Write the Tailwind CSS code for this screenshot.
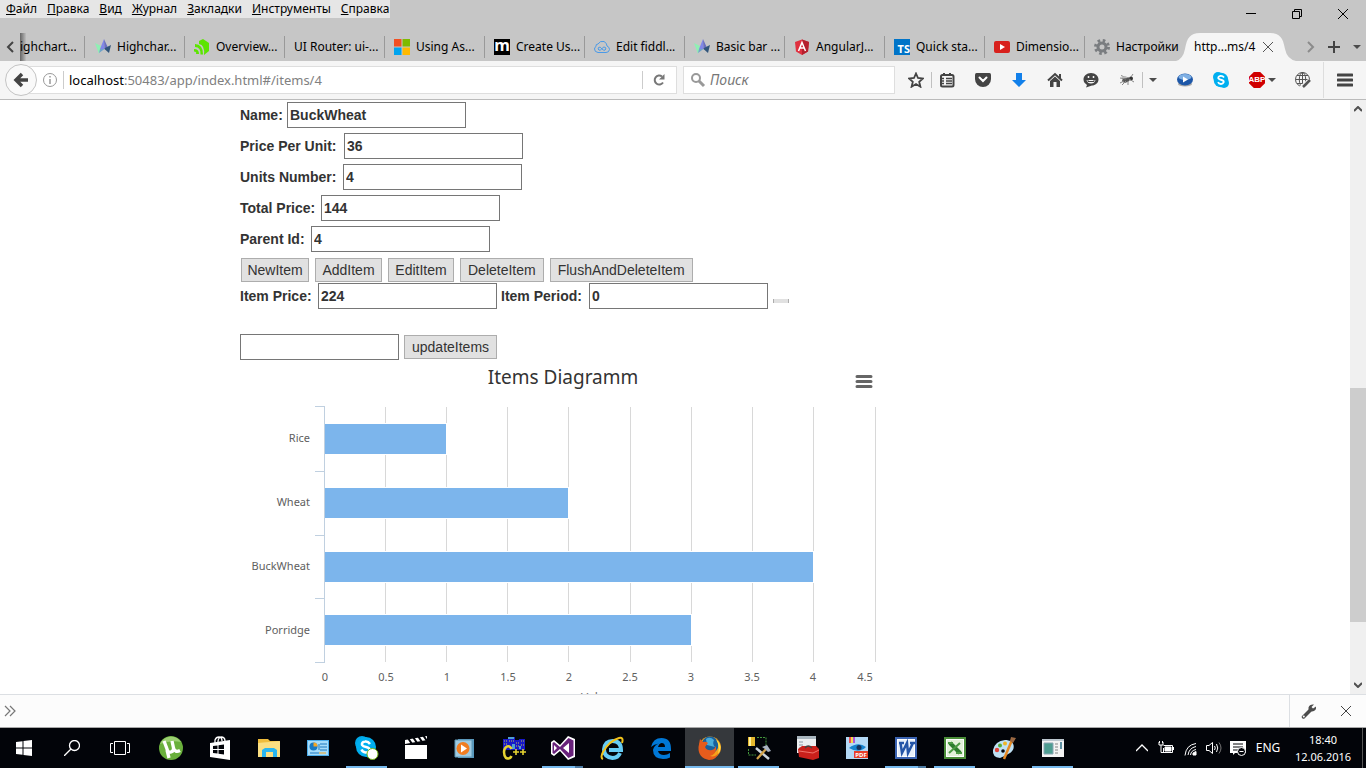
<!DOCTYPE html>
<html lang="ru">
<head>
<meta charset="utf-8">
<title>localhost:50483/app/index.html#/items/4</title>
<script src="https://cdn.jsdelivr.net/npm/@tailwindcss/browser@4"></script>
</head>
<body class="flex h-screen flex-col overflow-hidden bg-white font-['Noto_Sans','Open_Sans',sans-serif] text-xs text-black">

<svg class="hidden">
  <defs>
    <symbol id="highcharts" viewBox="0 0 16 16">
      <path d="M0 4L6 7L4 15Z" fill="#8ff0b4"/><path d="M9 0L5 10L9.500 10Z" fill="#8087e8"/><path d="M9 0L14 11L9.500 10Z" fill="#6a6fc0"/><path d="M5 10L9.500 10L4 14Z" fill="#6fa3c9"/><path d="M10 9L16 6L14 14L9.500 10Z" fill="#30557b"/>
    </symbol>
    <symbol id="caret" viewBox="0 0 8 4"><path d="M0 0H8L4 4Z" fill="#4c4c4c"/></symbol>
    <symbol id="cross" viewBox="0 0 12 12"><path d="M1 1L11 11M11 1L1 11" stroke="currentColor" fill="none"/></symbol>
  </defs>
</svg>

<header class="shrink-0 bg-[#c6c6c6]">
  <div class="flex h-[33px] items-start justify-between">
    <nav class="flex h-[18px] w-[390px] items-center gap-2.5 bg-[#e6e6e6] pl-1.5 leading-4">
      <a href="#"><u>Ф</u>айл</a><a href="#"><u>П</u>равка</a><a href="#"><u>В</u>ид</a><a href="#"><u>Ж</u>урнал</a><a href="#"><u>З</u>акладки</a><a href="#"><u>И</u>нструменты</a><a href="#"><u>С</u>правка</a>
    </nav>
    <div class="flex h-7 items-center">
      <button aria-label="Свернуть" class="flex w-[46px] justify-center"><svg class="h-3 w-3" viewBox="0 0 12 12"><path d="M1 5.500H11" stroke="#000"/></svg></button>
      <button aria-label="Развернуть" class="flex w-[46px] justify-center"><svg class="h-3 w-3" viewBox="0 0 12 12"><path d="M1.500 3.500H8.500V10.500H1.500ZM3.500 3V1.500H10.500V8.500H9" stroke="#000" fill="none"/></svg></button>
      <button aria-label="Закрыть" class="flex w-[46px] justify-center"><svg class="h-3 w-3"><use href="#cross"/></svg></button>
    </div>
  </div>
  <div class="flex h-7 items-stretch overflow-hidden whitespace-nowrap">
    <button aria-label="Назад по вкладкам" class="flex w-5 shrink-0 items-center justify-center"><svg class="h-3 w-2" viewBox="0 0 8 12"><path d="M7 1L2 6L7 11" fill="none" stroke="#444" stroke-width="2"/></svg></button>
    <button class="flex h-7 w-[65px] shrink-0 items-center bg-linear-to-r from-[#666] to-[#c6c6c6] to-10% pr-2"><span class="w-14 truncate text-clip">ighchart...</span><span class="ml-auto"></span></button>
    <div class="flex min-w-0 grow items-center">
      <button class="-ml-px flex h-[22px] w-[100px] items-center gap-1.5 border-l border-[#999] pl-[10px]"><svg class="size-4"><use href="#highcharts"/></svg>Highchar...</button>
      <button class="flex h-[22px] w-[100px] items-center gap-1.5 border-l border-[#999] pl-[9px]"><svg class="size-4" viewBox="0 0 16 16"><path d="M5 2L9 0L15 4V12L10 16Q11 6 5 5Z" fill="#5ce500"/><path d="M1 5Q9 5 9 15.500H6.500Q7 8 1 8Z" fill="#5ce500"/><path d="M0 10Q5 10 5 15H2Q3 12.500 0 12.500Z" fill="#5ce500"/></svg>Overview...</button>
      <button class="flex h-[22px] w-[100px] items-center border-l border-[#999] pl-[9px]">UI Router: ui-...</button>
      <button class="flex h-[22px] w-[100px] items-center gap-1.5 border-l border-[#999] pl-[9px]"><svg class="size-4" viewBox="0 0 16 16"><path d="M0 0H7.500V7.500H0Z" fill="#f25022"/><path d="M8.500 0H16V7.500H8.500Z" fill="#7fba00"/><path d="M0 8.500H7.500V16H0Z" fill="#00a4ef"/><path d="M8.500 8.500H16V16H8.500Z" fill="#ffb900"/></svg>Using As...</button>
      <button class="flex h-[22px] w-[100px] items-center gap-1.5 border-l border-[#999] pl-[9px]"><span class="flex size-4 items-center justify-center bg-black pb-1 text-base leading-4 font-bold text-white">m</span>Create Us...</button>
      <button class="flex h-[22px] w-[100px] items-center gap-1.5 border-l border-[#999] pl-[9px]"><svg class="size-4" viewBox="0 0 16 16" fill="none" stroke="#4a9ae8"><path d="M4 13.500Q.5 13 .5 10Q.7 8 2 7.500Q1.500 5 4 5Q6 1.500 10 2.500Q13 4 13 7Q15.500 8 15.500 10.500Q15 13.500 12 13.500Z"/><path d="M8 10Q6 7 4.500 8.500Q3.500 10 5 11.200Q6.500 11.500 8 9.500Q10 7 11.500 8.500Q12.300 10 11 11.200Q9.500 11.500 8 10Z"/></svg>Edit fiddl...</button>
      <button class="flex h-[22px] w-[100px] items-center gap-1.5 border-l border-[#999] pl-[9px]"><svg class="size-4"><use href="#highcharts"/></svg>Basic bar ...</button>
      <button class="flex h-[22px] w-[100px] items-center gap-1.5 border-l border-[#999] pl-[9px]"><svg class="size-4" viewBox="0 0 16 16"><path d="M8 .5L15 3L14 12.500L8 16L2 12.500L1 3Z" fill="#e0303f"/><path d="M8 .5L15 3L14 12.500L8 16Z" fill="#b5202e"/><path d="M4.500 12L8 3.500L11.500 12M6 9H10" fill="none" stroke="#fff" stroke-width="1.500"/></svg>AngularJ...</button>
      <button class="flex h-[22px] w-[100px] items-center gap-1.5 border-l border-[#999] pl-[9px]"><span class="flex size-4 items-end justify-end bg-[#0074c8] text-[11px] leading-3 font-bold text-white">TS</span>Quick sta...</button>
      <button class="flex h-[22px] w-[100px] items-center gap-1.5 border-l border-[#999] pl-[9px]"><svg class="size-4" viewBox="0 0 16 16"><rect y="2" width="16" height="12" rx="2" fill="#d8211d"/><path d="M6 5L11 8L6 11Z" fill="#fff"/></svg>Dimensio...</button>
      <button class="flex h-[22px] w-[92px] items-center gap-1.5 border-l border-[#999] pl-[9px]"><svg class="size-4 shrink-0" viewBox="0 0 16 16" fill="none" stroke="#7a7d80"><circle cx="8" cy="8" r="4" stroke-width="3"/><circle cx="8" cy="8" r="6.500" stroke-width="3" stroke-dasharray="2.550 2.550"/></svg>Настройки</button>
      <div class="relative h-7 w-[116px] shrink-0">
        <svg class="absolute inset-0 h-7 w-[122px]" viewBox="0 0 122 28"><path d="M0 28Q7 26 9 16C11 5 14 0 24 0H94C104 0 107 5 109 16Q111 26 120 28Z" fill="#f5f5f5"/></svg>
        <div class="relative flex h-7 items-center justify-between pr-[18px] pl-[18px]"><button>http...ms/4</button><button aria-label="Закрыть вкладку" class="text-[#555]"><svg class="size-3"><use href="#cross"/></svg></button></div>
      </div>
      <div class="flex grow items-center justify-end gap-[13px] pr-[5px]">
        <button aria-label="Вперёд по вкладкам"><svg class="h-3 w-2" viewBox="0 0 8 12"><path d="M1 1L6 6L1 11" fill="none" stroke="#8b8b8b" stroke-width="2"/></svg></button>
        <button aria-label="Новая вкладка"><svg class="size-3" viewBox="0 0 12 12"><path d="M6 0V12M0 6H12" stroke="#444" stroke-width="2"/></svg></button>
        <button aria-label="Список вкладок"><svg class="h-1 w-2"><use href="#caret"/></svg></button>
      </div>
    </div>
  </div>
</header>

<div class="flex h-[39px] shrink-0 items-center border-b border-[#bbb] bg-[#f5f5f5]">
  <button aria-label="Назад" class="z-10 ml-[5px] flex size-8 shrink-0 items-center justify-center rounded-full border border-[#c4c4c4] bg-[#f9f9f9]"><svg class="size-4" viewBox="0 0 16 16"><path d="M9 2L3 8L9 14M3 8H15" fill="none" stroke="#444" stroke-width="3.500"/></svg></button>
  <div class="-ml-4 flex h-7 grow items-center border border-[#dedede] bg-white pl-5">
    <svg class="size-4 shrink-0" viewBox="0 0 16 16" fill="none" stroke="#999"><circle cx="8" cy="8" r="6.500"/><path d="M8 7V12M8 4V5.500" stroke-width="1.500"/></svg>
    <span class="ml-[5px] h-[18px] w-px shrink-0 bg-[#ccc]"></span>
    <div role="textbox" aria-label="Адрес" tabindex="0" class="ml-[5px] grow text-[13px] leading-5 text-[#808080]"><span class="text-black">localhost</span>:50483/app/index.html#/items/4</div>
    <button aria-label="Обновить" class="flex h-[18px] w-[34px] items-center justify-center border-l border-[#ccc] pr-0.5"><svg class="size-3" viewBox="0 0 12 12"><path d="M10 8.500A4.500 4.500 0 1 1 9 2.500" fill="none" stroke="#777" stroke-width="2"/><path d="M11.500 0V5.500H6Z" fill="#777"/></svg></button>
  </div>
  <label class="ml-1.5 flex h-7 w-[212px] shrink-0 items-center gap-1 border border-[#dedede] bg-white pl-1.5">
    <svg class="size-4 shrink-0" viewBox="0 0 16 16" fill="none" stroke="#999"><circle cx="6" cy="6" r="4" stroke-width="2"/><path d="M9 9L14 14" stroke-width="3"/></svg>
    <input aria-label="Поиск" placeholder="Поиск" class="w-40 text-sm leading-5 italic outline-none placeholder:text-[#777]">
  </label>
  <div class="flex shrink-0 items-center text-[#444]">
    <button aria-label="В закладки" class="ml-1.5 flex w-[30px] justify-center"><svg class="size-4" viewBox="0 0 16 16"><path d="M8 1.500L10 6L15 6.500L11.200 9.800L12.400 14.700L8 12L3.600 14.700L4.800 9.800L1 6.500L6 6Z" fill="none" stroke="currentColor" stroke-width="1.800"/></svg></button>
    <span class="h-4 w-px bg-[#c0c0c0]"></span>
    <button aria-label="Закладки" class="flex w-[30px] justify-center"><svg class="size-4" viewBox="0 0 16 16" fill="none" stroke="currentColor"><rect x="2" y="3" width="12.500" height="11.500" rx="1.500" stroke-width="2"/><path d="M5 1V4M11 1V4" stroke-width="2"/><path d="M1 6.500H5M7 6.500H13M1 9H5M7 9H13M1 11.500H5M7 11.500H13" stroke-width="1.300"/></svg></button>
    <button aria-label="Pocket" class="ml-[3px] flex w-9 justify-center"><svg class="size-4" viewBox="0 0 16 16"><path d="M1.500 1H14.500Q16 1 16 3V7A8 8 0 0 1 0 7V3Q0 1 1.500 1Z" fill="currentColor"/><path d="M4.500 5.500L8 9L11.500 5.500" fill="none" stroke="#fff" stroke-width="2" stroke-linecap="round"/></svg></button>
    <button aria-label="Загрузки" class="flex w-9 justify-center"><svg class="size-4" viewBox="0 0 16 16"><path d="M5 1H11V8H15L8 15L1 8H5Z" fill="#1280ea"/></svg></button>
    <button aria-label="Домой" class="flex w-9 justify-center"><svg class="size-4" viewBox="0 0 16 16"><path d="M1 8.500L8 2L15 8.500" fill="none" stroke="currentColor" stroke-width="2"/><path d="M12 2H14V7L12 5ZM3 9L8 4.500L13 9V15H9.500V10H6.500V15H3Z" fill="currentColor"/></svg></button>
    <button aria-label="Hello" class="flex w-9 justify-center"><svg class="size-4" viewBox="0 0 16 16"><path d="M8 1C12.500 1 15.500 4 15.500 7.500C15.500 11 12 13.500 9 13.500L3 15.500L4 13C2 11.500 .5 10 .5 7.500C.5 4 3.500 1 8 1Z" fill="currentColor"/><path d="M3.500 8H12.500Q11.500 11.500 8 11.500Q4.500 11.500 3.500 8Z" fill="#f5f5f5"/><path d="M5 8V9.500H11V8" fill="none" stroke="#444"/><path d="M5.500 4V6M10.500 4V6" stroke="#f5f5f5" stroke-width="1.500"/></svg></button>
    <button aria-label="Firebug" class="flex w-[33px] justify-center pl-[3px]"><svg class="size-4" viewBox="0 0 16 16"><ellipse cx="7" cy="8" rx="4" ry="2.300" transform="rotate(-20 7 8)" fill="#555"/><circle cx="12" cy="6.500" r="2" fill="#333"/><path d="M1 6L7 7M2 3.500L8 6M10 7L15 10M7 9L3 13M9 9L9 13M5 9L1 11M12 5L14 2" stroke="#888"/><path d="M2 6Q6 2 9 6Z" fill="#bbb"/></svg></button>
    <span class="h-4 w-px bg-[#c0c0c0]"></span>
    <button aria-label="Меню Firebug" class="flex w-5 justify-center"><svg class="h-1 w-2"><use href="#caret"/></svg></button>
    <button aria-label="Видео" class="ml-1 flex w-9 justify-center"><svg class="size-4" viewBox="0 0 16 16"><ellipse cx="8" cy="12" rx="7" ry="2.500" fill="#aaa"/><ellipse cx="8" cy="7.500" rx="8" ry="6" fill="#1d57a8"/><ellipse cx="8" cy="5" rx="6.500" ry="3" fill="#7fb0e4"/><path d="M6 4.500L11 7.500L6 10.500Z" fill="#fff"/></svg></button>
    <button aria-label="Skype" class="flex w-9 justify-center"><svg class="size-4" viewBox="0 0 16 16"><circle cx="5" cy="5" r="5" fill="#00aff0"/><circle cx="11" cy="11" r="5" fill="#00aff0"/><circle cx="8" cy="8" r="7.300" fill="#00aff0"/><path d="M11 5.500Q9.500 3.500 7 4Q5 4.500 5.300 6.300Q6 7.500 8.500 8Q11 8.500 10.700 10.200Q10 12 8 12Q5.800 12 5 10.200" fill="none" stroke="#fff" stroke-width="1.800"/></svg></button>
    <button aria-label="Adblock Plus" class="flex w-[46px] items-center gap-[3px] pl-[10px]"><span class="flex size-4 items-center justify-center bg-[#d00000] font-['Liberation_Sans',sans-serif] text-[8px] leading-4 font-bold text-white [clip-path:polygon(30%_0,70%_0,100%_30%,100%_70%,70%_100%,30%_100%,0_70%,0_30%)]">ABP</span><svg class="h-1 w-2"><use href="#caret"/></svg></button>
    <button aria-label="Редактор" class="flex w-9 justify-center"><svg class="size-4" viewBox="0 0 16 16" fill="none" stroke="#555"><circle cx="7.500" cy="7.500" r="7"/><ellipse cx="7.500" cy="7.500" rx="3.200" ry="7"/><path d="M.5 7.500H14.500M2 3.500H13M2 11.500H10M7.500 0V15"/><path d="M15 8L8 14L6 16" stroke="#f5f5f5" stroke-width="4"/><path d="M15 8L8 15" stroke-width="2.500"/></svg></button>
    <span class="ml-0.5 h-9 w-px bg-[#ddd]"></span>
    <button aria-label="Меню" class="flex w-[42px] justify-center"><svg class="size-4" viewBox="0 0 16 16"><path d="M1 3H15M1 8H15M1 13H15" stroke="#444" stroke-width="3" stroke-linecap="round"/></svg></button>
  </div>
</div>

<div class="flex min-h-0 grow">
  <main class="grow overflow-hidden pt-0.5 pl-60 font-['Liberation_Sans',Arial,sans-serif] text-sm leading-5 text-[#333]">
    <div class="flex flex-col gap-[5px] font-bold">
      <div class="flex items-center"><label for="name" class="w-[47px]">Name:</label><input id="name" value="BuckWheat" class="h-[26px] w-[179px] border border-[#767676] px-0.5"></div>
      <div class="flex items-center"><label for="ppu" class="w-[104px]">Price Per Unit:</label><input id="ppu" value="36" class="h-[26px] w-[179px] border border-[#767676] px-0.5"></div>
      <div class="flex items-center"><label for="units" class="w-[103px]">Units Number:</label><input id="units" value="4" class="h-[26px] w-[179px] border border-[#767676] px-0.5"></div>
      <div class="flex items-center"><label for="total" class="w-[81px]">Total Price:</label><input id="total" value="144" class="h-[26px] w-[179px] border border-[#767676] px-0.5"></div>
      <div class="flex items-center"><label for="parent" class="w-[71px]">Parent Id:</label><input id="parent" value="4" class="h-[26px] w-[179px] border border-[#767676] px-0.5"></div>
    </div>
    <div class="mt-1.5 ml-px flex gap-1.5">
      <button class="h-6 w-[68px] border border-[#adadad] bg-[#e1e1e1]">NewItem</button>
      <button class="h-6 w-[67px] border border-[#adadad] bg-[#e1e1e1]">AddItem</button>
      <button class="h-6 w-[66px] border border-[#adadad] bg-[#e1e1e1]">EditItem</button>
      <button class="h-6 border border-[#adadad] bg-[#e1e1e1] px-[7px]">DeleteItem</button>
      <button class="h-6 border border-[#adadad] bg-[#e1e1e1] px-[7px]">FlushAndDeleteItem</button>
    </div>
    <div class="mt-px flex items-center font-bold">
      <label for="price" class="w-[78px]">Item Price:</label><input id="price" value="224" class="h-[26px] w-[179px] border border-[#767676] px-0.5">
      <label for="period" class="ml-1 w-[88px]">Item Period:</label><input id="period" value="0" class="h-[26px] w-[179px] border border-[#767676] px-0.5">
      <button aria-label="Применить" class="mb-1.5 ml-[5px] h-1 w-4 self-end border-x border-[#adadad] bg-[#e1e1e1]"></button>
    </div>
    <div class="mt-[25px] flex items-center gap-[5px]">
      <input aria-label="Items" class="h-[26px] w-[159px] border border-[#767676] px-0.5">
      <button class="h-6 border border-[#adadad] bg-[#e1e1e1] px-[7px]">updateItems</button>
    </div>
    <svg class="h-[400px] w-[646px] font-['Noto_Sans',sans-serif]" viewBox="0 0 646 400" role="img" aria-label="Items Diagramm">
      <text x="323" y="24" text-anchor="middle" font-size="19" fill="#333">Items Diagramm</text>
      <path d="M617 16.500H631M617 21.500H631M617 26.500H631" stroke="#666" stroke-width="3" stroke-linecap="round"/>
      <path d="M145.500 47V302M206.500 47V302M267.500 47V302M328.500 47V302M390.500 47V302M451.500 47V302M512.500 47V302M573.500 47V302M635.500 47V302" stroke="#d8d8d8"/>
      <path d="M75 46.500H84.500V302.500H75M75 111.500H84M75 175.500H84M75 238.500H84" fill="none" stroke="#c0d0e0"/>
      <g fill="#7cb5ec" stroke="#fff">
        <rect x="84.500" y="63.500" width="122" height="31"/><rect x="84.500" y="127.500" width="244" height="31"/><rect x="84.500" y="191.500" width="489" height="31"/><rect x="84.500" y="254.500" width="367" height="31"/>
      </g>
      <path d="M84.500 46V303" stroke="#c0d0e0"/>
      <g font-size="11" fill="#606060" text-anchor="end">
        <text x="70" y="82">Rice</text><text x="70" y="146">Wheat</text><text x="70" y="210">BuckWheat</text><text x="70" y="274">Porridge</text>
      </g>
      <g font-size="11" fill="#606060" text-anchor="middle">
        <text x="85" y="321">0</text><text x="146" y="321">0.5</text><text x="207" y="321">1</text><text x="268" y="321">1.5</text><text x="329" y="321">2</text><text x="390" y="321">2.5</text><text x="451" y="321">3</text><text x="512" y="321">3.5</text><text x="573" y="321">4</text><text x="625" y="321">4.5</text>
      </g>
      <text x="341" y="342" font-size="12" fill="#707070">Values</text>
    </svg>
  </main>
  <div class="flex w-4 shrink-0 flex-col items-center bg-[#f0f0f0]">
    <svg class="mt-1.5 h-1.5 w-2" viewBox="0 0 8 6"><path d="M0 5L4 1L8 5" fill="none" stroke="#505050" stroke-width="2"/></svg>
    <div class="w-full grow-276"></div>
    <div class="h-[234px] w-full bg-[#cdcdcd]"></div>
    <div class="w-full grow-60"></div>
    <svg class="mb-1.5 h-1.5 w-2" viewBox="0 0 8 6"><path d="M0 1L4 5L8 1" fill="none" stroke="#505050" stroke-width="2"/></svg>
  </div>
</div>

<div class="flex h-[34px] shrink-0 items-center border-t border-b border-t-[#dcdfe3] border-b-[#a8a8a8] bg-[#fcfcfc]">
  <button aria-label="Показать панель" class="ml-1"><svg class="size-3" viewBox="0 0 12 12"><path d="M1 1L6 6L1 11M6 1L11 6L6 11" fill="none" stroke="#777" stroke-width="1.200"/></svg></button>
  <div class="ml-auto flex h-full items-center border-l border-[#dcdfe3] pr-0.5">
    <button aria-label="Настройки панели" class="flex w-[37px] justify-center"><svg class="size-4" viewBox="0 0 16 16"><path d="M2.500 14L9 7.500" stroke="#4c4c4c" stroke-width="3.500" stroke-linecap="round"/><path d="M13 1.500L10.500 4L12 5.500L15 3.500Q15.500 8 11 8.500Q7 8.500 7.500 4.500Q8.500 1 13 1.500Z" fill="#4c4c4c"/><circle cx="2.800" cy="13.500" r="1" fill="#fcfcfc"/></svg></button>
    <button aria-label="Закрыть панель" class="flex w-[37px] justify-center text-[#444]"><svg class="size-3"><use href="#cross"/></svg></button>
  </div>
</div>

<footer class="flex h-10 shrink-0 items-stretch bg-[#020409] text-white">
  <button aria-label="Пуск" class="flex w-12 items-center justify-center"><svg class="size-4" viewBox="0 0 16 16" fill="#fff"><path d="M0 2L6.500 1.200V7.500H0ZM7.500 1L16 0V7.500H7.500ZM0 8.500H6.500V14.800L0 14ZM7.500 8.500H16V16L7.500 15Z"/></svg></button>
  <button aria-label="Поиск" class="flex w-12 items-center justify-center"><svg class="size-4" viewBox="0 0 16 16" fill="none" stroke="#fff" stroke-width="1.300"><circle cx="10.500" cy="5.500" r="5"/><path d="M7 9L0 16"/></svg></button>
  <button aria-label="Представление задач" class="flex w-[50px] items-center justify-center pr-0.5"><svg class="h-4 w-5" viewBox="0 0 20 16" fill="none" stroke="#fff"><path d="M4.500 1.500H15.500V14.500H4.500ZM3 3.500H.5V12.500H3M17 3.500H19.500V12.500H17"/></svg></button>

  <button aria-label="uTorrent" class="flex w-[49px] items-center justify-center"><svg class="size-6" viewBox="0 0 24 24"><circle cx="12" cy="12" r="12" fill="#6ab03c"/><path d="M1 8A12 12 0 0 1 22 6Q12 4 1 8Z" fill="#9bcf72"/><path d="M5 5L8 13Q9 17 12 16Q15 15 14.500 12L13 5M14.500 12Q16 17 21 14.500M8 14L10 22" fill="none" stroke="#fff" stroke-width="3.300"/></svg></button>
  <button aria-label="Магазин" class="flex w-[49px] items-center justify-center"><svg class="size-6" viewBox="0 0 24 24"><path d="M2 7L22 4V24L2 21Z" fill="#fff"/><path d="M7 7V4Q8 1 11 1Q14 1 14 5M10 6Q10 2 13 1Q17 1 17 5" fill="none" stroke="#fff" stroke-width="1.300"/><path d="M5 10L9.500 9.500V13H5ZM10.500 9.300L16 8.500V13H10.500ZM5 14H9.500V17.500L5 17ZM10.500 14H16V18.500L10.500 17.700Z" fill="#020409"/></svg></button>
  <button aria-label="Проводник" class="flex w-[49px] items-center justify-center"><svg class="size-6" viewBox="0 0 24 24"><path d="M1 3H11L13 5H22V21H1Z" fill="#f0bd3c"/><path d="M1 7L23 5V21H1Z" fill="#fbdf82"/><path d="M5 21V14L8 12H17L20 14V21H16V16H9V21Z" fill="#29b6f0"/></svg></button>
  <button aria-label="Панель управления" class="flex w-[49px] items-center justify-center"><svg class="size-6" viewBox="0 0 24 24"><rect x="1" y="4" width="22" height="16" fill="#4cadea"/><rect x="2" y="5" width="20" height="14" fill="#a5dcfa"/><circle cx="7.500" cy="10.500" r="4" fill="#1679c4"/><path d="M7.500 10.500V6.500A4 4 0 0 1 11.500 10.500Z" fill="#f5a623"/><path d="M14 8H21M14 11H21M14 14H21M13 8V14M4 17H13" stroke="#1e78be"/><path d="M13 17H20" stroke="#f5a623"/></svg></button>
  <button aria-label="Skype" class="relative flex w-[49px] items-center justify-center"><svg class="size-6" viewBox="0 0 24 24"><circle cx="7" cy="7" r="7" fill="#00a8e8"/><circle cx="11" cy="11" r="10" fill="#00aff0"/><circle cx="15" cy="16" r="6" fill="#00a8e8"/><path d="M15 8Q13 5 10 5.500Q6.500 6 7 8.800Q8 10.500 11 11Q15.500 12 14.500 14.500Q13.500 17 10.500 16.500Q7.500 16 6.500 13.500" fill="none" stroke="#fff" stroke-width="2.500"/><circle cx="17.500" cy="18" r="5.500" fill="#fff" stroke="#74b816"/></svg><span class="absolute inset-x-1 bottom-0 h-0.5 bg-[#76b9ed]"></span></button>
  <button aria-label="Кино и ТВ" class="flex w-[49px] items-center justify-center"><svg class="size-6" viewBox="0 0 24 24"><path d="M1 9H23V23H1Z" fill="#fff"/><path d="M1 4L23 0V4L1 8Z" fill="#fff"/><path d="M4 2L8 8M9 1L13 7M14 0L18 6M19 -1L23 5" stroke="#020409" stroke-width="2"/></svg></button>
  <button aria-label="Проигрыватель" class="flex w-[49px] items-center justify-center"><svg class="size-6" viewBox="0 0 24 24"><path d="M5 3H21V22H5Z" fill="#5898bd"/><path d="M2 4H19V21H2Z" fill="#9fcbe1" stroke="#5f99b8"/><circle cx="10" cy="12.500" r="6.500" fill="#f07d21"/><path d="M8 8.500L14 12.500L8 16.500Z" fill="#fff"/></svg></button>
  <button aria-label="C++" class="flex w-[49px] items-center justify-center"><svg class="size-6" viewBox="0 0 24 24"><path d="M1 3H6V1H13V4H17V3H23V14H1Z" fill="#1818c8"/><path d="M6 1H12V3H6ZM10 8H13V13H10ZM17 10H19V13H17Z" fill="#4f9fd0"/><path d="M2 5H5M2 8H5M7 5H12M14 7H17M19 5H22M19 9H22M14 10H17" stroke="#c9c24a" stroke-dasharray="1 1"/><path d="M9.500 13Q8 9.500 5 10.500Q2 12 2 16Q2 20 4 22Q8 23.500 9.500 20" fill="none" stroke="#e5d331" stroke-width="2.500"/><path d="M11 16H17M14 13V19M18 16H24M21 13V19" stroke="#e5d331" stroke-width="1.600"/></svg></button>
  <button aria-label="Visual Studio" class="relative flex w-[49px] items-center justify-center"><svg class="size-6" viewBox="0 0 24 24"><path d="M0 6L3 4L9 9L17 0L24 3V21L17 24L9 15L3 20L0 18Z" fill="#fff"/><path d="M1.500 7L3 6L9 11L17.500 2L22.500 4.500V19.500L17.500 22L9 13L3 18L1.500 17Z" fill="#68217a"/><path d="M3 9V15L6 12ZM18 7V17L12 12Z" fill="#fff"/></svg><span class="absolute inset-x-1 bottom-0 h-0.5 border-r-8 border-[#4d7ba3] bg-[#76b9ed]"></span></button>
  <button aria-label="Internet Explorer" class="flex w-[49px] items-center justify-center"><svg class="size-6" viewBox="0 0 24 24"><path d="M20 17Q18 22 12.500 22Q4 21 4 13.500Q5 5 12.500 5Q21 5 21 14H9" fill="none" stroke="#66ccf4" stroke-width="4"/><path d="M3 23Q0 22 3 16Q9 5 19 2Q24 1 22 7" fill="none" stroke="#f1c21b" stroke-width="2"/></svg></button>
  <button aria-label="Edge" class="flex w-[49px] items-center justify-center"><svg class="size-6" viewBox="0 0 24 24"><path d="M2 11Q4 2 12.500 2Q22 2 22 13V15H9Q10 19 15 19Q18 19 21 17V21.500Q18 23 14 23Q4 22.500 4 14Q5 9 10 7.500Q5 8 2 11ZM9 11H16Q16 7 12.500 7Q10 7.500 9 11Z" fill="#0078d7"/></svg></button>
  <button aria-label="Firefox" class="relative flex w-[49px] items-center justify-center bg-[#35383c]"><svg class="size-6" viewBox="0 0 24 24"><circle cx="12" cy="11.500" r="11" fill="#f6a11b"/><circle cx="12" cy="9" r="8.500" fill="#18609d"/><path d="M8 3Q12 0 16 4Q14 8 17 11L9 9Z" fill="#49acd9"/><path d="M2 3L5 6Q8 5 10 7L7 11Q9 15 14 14Q17 13 18 10Q19 18 12 20Q19 22 22 14Q19 24 11 24Q0 22 .5 11Z" fill="#e65c1c"/><path d="M18 3Q26 11 20 18Q22 10 18 3Z" fill="#ffe04a"/></svg><span class="absolute inset-x-0 bottom-0 h-0.5 bg-[#76b9ed]"></span></button>
  <button aria-label="Инструменты" class="relative flex w-[49px] items-center justify-center"><svg class="size-6" viewBox="0 0 24 24"><path d="M1 1H8V10H1Z" fill="#e5b72c"/><path d="M2 1H4V10H2Z" fill="#fff2a0"/><path d="M10 1.500H19V10M1.500 13V19H9" fill="none" stroke="#43963c" stroke-dasharray="2 1"/><path d="M9 12L22 23" stroke="#ccd4dd" stroke-width="2.500"/><path d="M20 12L10 23" stroke="#d3a34a" stroke-width="2.300"/><path d="M15 11L20 9L24 15L21 16L18 13Z" fill="#aab3c2"/></svg><span class="absolute inset-x-1 bottom-0 h-0.5 bg-[#76b9ed]"></span></button>
  <button aria-label="Набор инструментов" class="flex w-[49px] items-center justify-center"><svg class="size-6" viewBox="0 0 24 24"><rect x="1" width="19" height="17" fill="#eceff1"/><path d="M1 0H20V3H1Z" fill="#a9b6bf"/><path d="M3 6H7M3 9H7M3 12H7" stroke="#8a98a5"/><path d="M2 13L6 10H20L23 13V22L17 24L3 21Z" fill="#c9201b"/><path d="M3 15L17 17L23 14" fill="none" stroke="#f0736a"/><path d="M9 12Q12 8 16 12" fill="none" stroke="#444" stroke-width="1.500"/></svg></button>
  <button aria-label="PDF" class="flex w-[49px] items-center justify-center"><svg class="size-6" viewBox="0 0 24 24"><rect x="1" y="1" width="22" height="22" fill="#b3d9f6"/><path d="M4 1H6V7H4Z" fill="#ef5454"/><path d="M6 1H8V7H6Z" fill="#f4dd4d"/><path d="M8 1H10V7H8Z" fill="#b056d8"/><path d="M4 12Q13 5 21 11Q14 18 4 12Z" fill="#1784cf"/><circle cx="14" cy="11.500" r="2.500" fill="#15325c"/><rect x="9" y="15" width="14" height="7" fill="#e8402a"/><text x="16" y="21" text-anchor="middle" font-size="6" font-weight="bold" fill="#fff">PDF</text></svg></button>
  <button aria-label="Word" class="relative flex w-[49px] items-center justify-center"><svg class="size-6" viewBox="0 0 24 24"><rect x="2" y="2" width="20" height="20" fill="#fff" stroke="#3c64b2" stroke-width="2"/><rect x="4" y="4" width="16" height="16" fill="#e8f0fb"/><path d="M5 7H10M6.500 7L8 17L13 7L14 17L19 7M16 7H21" fill="none" stroke="#2455a8" stroke-width="2.500"/></svg><span class="absolute inset-x-1 bottom-0 h-0.5 border-r-8 border-[#4d7ba3] bg-[#76b9ed]"></span></button>
  <button aria-label="Excel" class="relative flex w-[49px] items-center justify-center"><svg class="size-6" viewBox="0 0 24 24"><rect x="2" y="2" width="20" height="20" fill="#fff" stroke="#4a8d38" stroke-width="2"/><rect x="4" y="4" width="16" height="16" fill="#e3f1da"/><path d="M7 7L17 17" stroke="#2d7d2e" stroke-width="4"/><path d="M17 7L6 17M5 7H10M13 17H19" stroke="#4b9b43" stroke-width="2"/></svg><span class="absolute inset-x-1 bottom-0 h-0.5 bg-[#76b9ed]"></span></button>
  <button aria-label="Paint" class="flex w-[49px] items-center justify-center"><svg class="size-6" viewBox="0 0 24 24"><path d="M13 4C23 4 24 13 18 17Q13 20 8 22Q0 21 1 14Q3 5 13 4Z" fill="#bfe1f4"/><circle cx="5" cy="14" r="2.200" fill="#df4338"/><circle cx="8" cy="9.500" r="2" fill="#56aa36"/><circle cx="13" cy="7.500" r="2" fill="#f0b525"/><circle cx="11" cy="15" r="1.800" fill="#020409"/><path d="M20 4L12 23" stroke="#e58a25" stroke-width="2.500"/><path d="M19 1L24 2L21 7L18 5Z" fill="#9a6843"/></svg></button>
  <button aria-label="Приложение" class="relative flex w-[49px] items-center justify-center"><svg class="size-6" viewBox="0 0 24 24"><rect x="1" y="3" width="22" height="18" fill="#f3f3f3"/><path d="M1 3H23V5H1Z" fill="#bcc7cf"/><path d="M3 7H12V18H3Z" fill="#4d9d91" stroke="#8aa4b2"/><path d="M14 8H17M14 11H17M14 14H17M14 17H17" stroke="#bbb" stroke-width="2"/><path d="M20 6V13" stroke="#2e7089" stroke-width="1.500"/></svg><span class="absolute inset-x-1 bottom-0 h-0.5 bg-[#76b9ed]"></span></button>

  <div class="ml-auto flex items-center">
    <button aria-label="Скрытые значки" class="w-3"><svg class="h-2 w-3" viewBox="0 0 12 8"><path d="M0 7L6 1L12 7" fill="none" stroke="#fff" stroke-width="1.300"/></svg></button>
    <button aria-label="Батарея" class="ml-2.5"><svg class="size-4" viewBox="0 0 16 16" fill="none" stroke="#fff"><path d="M5.500 5.500H14.500V12.500H5.500V8M15.500 7V10"/><path d="M7 7H13V11H7Z" fill="#fff"/><path d="M1 2V5H5V2M3 5V12.500H6M1.500 1V3M4.500 1V3"/></svg></button>
    <button aria-label="Сеть" class="ml-2"><svg class="size-4" viewBox="0 0 16 16" fill="none" stroke="#fff"><path d="M3 15.500Q4 5 14 3.500M6 15Q7 8 14 6.500M8.500 15Q9 10.500 14 9.500"/><path d="M11 15V13L14 11.500V15Z" fill="#fff"/></svg></button>
    <button aria-label="Громкость" class="ml-2"><svg class="size-4" viewBox="0 0 16 16" fill="none" stroke="#fff"><path d="M.5 5.500H3L6.500 2.500V13.500L3 10.500H.5Z"/><path d="M8.500 6Q10 8 8.500 10M10.500 4Q13 8 10.500 12"/><path d="M13 2.500Q17 8 13 13.500" stroke="#777"/></svg></button>
    <button aria-label="Уведомления" class="ml-2"><svg class="size-4" viewBox="0 0 16 16"><path d="M0 1H16V13H5L3 15V13H0Z" fill="#fff"/><path d="M3 4H13M3 7H13M3 10H8" stroke="#020409"/><circle cx="11.500" cy="11.500" r="4" fill="#020409" stroke="#fff"/><path d="M9.500 11.500H13.500" stroke="#fff"/></svg></button>
    <button class="ml-2 w-7">ENG</button>
    <button class="ml-2 w-[66px] text-center text-[11px] leading-[17px]">18:40<br>12.06.2016</button>
    <span class="ml-1.5 h-10 w-1 border-l border-[#555]"></span>
  </div>
</footer>
</body>
</html>
